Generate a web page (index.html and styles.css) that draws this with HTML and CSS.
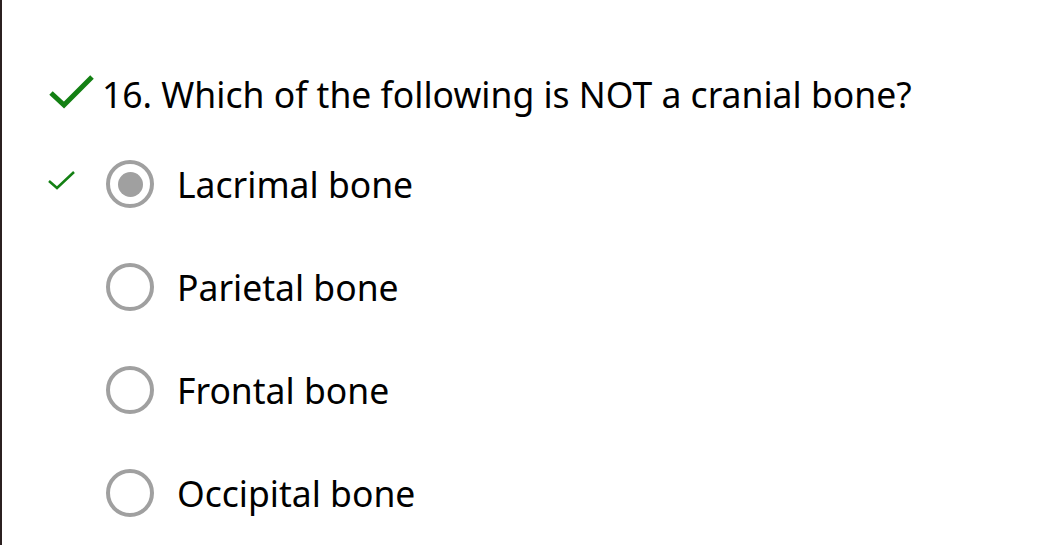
FILE: index.html
```html
<!DOCTYPE html>
<html>
<head>
<meta charset="utf-8">
<link rel="stylesheet" href="styles.css">
</head>
<body>
<div class="page">
  <div class="question">
    <svg class="big-check" width="48" height="36" viewBox="0 0 48 36"><path d="M3 19 L16 31 L44 3" fill="none" stroke="#138013" stroke-width="5"/></svg>
    <span class="qtext">16. Which of the following is NOT a cranial bone?</span>
  </div>
  <ul class="options">
    <li class="option">
      <span class="mark"><svg width="30" height="22" viewBox="0 0 30 22"><path d="M2 12 L10 19 L27 3" fill="none" stroke="#138013" stroke-width="2.5"/></svg></span>
      <span class="radio checked"></span>
      <span class="label">Lacrimal bone</span>
    </li>
    <li class="option">
      <span class="mark"></span>
      <span class="radio"></span>
      <span class="label">Parietal bone</span>
    </li>
    <li class="option">
      <span class="mark"></span>
      <span class="radio"></span>
      <span class="label">Frontal bone</span>
    </li>
    <li class="option">
      <span class="mark"></span>
      <span class="radio"></span>
      <span class="label">Occipital bone</span>
    </li>
  </ul>
  <p class="explain">The lacrimal bone is a facial bone, it forms part of the orbit.</p>
</div>
</body>
</html>
```
FILE: styles.css
```css
html, body {
  margin: 0;
  padding: 0;
  background: #ffffff;
  height: 100%;
  overflow: hidden;
}
.page {
  border-left: 2px solid #2b2020;
  min-height: 100%;
  font-family: "Noto Sans", "DejaVu Sans", sans-serif;
  color: #000;
  padding-top: 70px;
  box-sizing: border-box;
}
.question {
  display: flex;
  align-items: center;
  padding-left: 46px;
  height: 48px;
}
.big-check {
  margin-right: 6px;
  margin-top: -4px;
}
.qtext {
  font-size: 35.5px;
  line-height: 48px;
}
.options {
  list-style: none;
  margin: 0;
  padding: 0;
  margin-top: 41px;
}
.option {
  display: flex;
  align-items: center;
  height: 50px;
  margin-bottom: 53px;
}
.mark {
  width: 30px;
  height: 22px;
  margin-left: 45px;
  margin-top: -8px;
}
.radio {
  width: 40px;
  height: 40px;
  border: 4px solid #a0a0a0;
  border-radius: 50%;
  margin-left: 29px;
  display: flex;
  align-items: center;
  justify-content: center;
  flex: none;
}
.radio.checked::after {
  content: "";
  width: 25px;
  height: 25px;
  border-radius: 50%;
  background: #a0a0a0;
}
.label {
  font-size: 35.5px;
  line-height: 50px;
  margin-left: 23px;
}
.explain {
  margin: 0;
  margin-top: -34px;
  padding-left: 236px;
  font-size: 35.5px;
  line-height: 50px;
  white-space: nowrap;
}
```
